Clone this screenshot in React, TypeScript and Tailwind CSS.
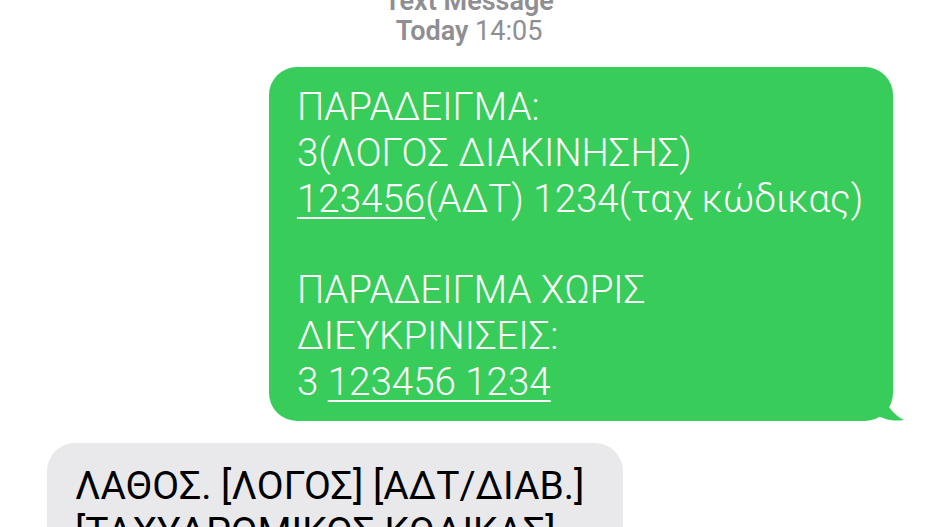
import React from 'react';

const font = { fontFamily: 'Roboto, "Noto Sans", sans-serif' };

const App: React.FC = () => {
  return (
    <div className="w-[938px] h-[527px] overflow-hidden bg-white" style={font}>
      {/* Header */}
      <div className="flex flex-col items-center -mt-[14px] text-[#8e8e93] text-[27px] leading-[30px]">
        <div className="font-semibold">Text Message</div>
        <div>
          <span className="font-semibold">Today</span> 14:05
        </div>
      </div>

      {/* Outgoing */}
      <div className="flex justify-end pr-[45px] mt-[21px]">
        <div className="relative bg-[#38cc5a] rounded-[28px] w-[624px] pl-[28px] pt-[17px] pb-[17px] text-white text-[38.5px] leading-[45.75px] font-light">
          <div>ΠΑΡΑΔΕΙΓΜΑ:</div>
          <div>3(ΛΟΓΟΣ ΔΙΑΚΙΝΗΣΗΣ)</div>
          <div>
            <span className="underline underline-offset-[5px] decoration-2">123456</span>(ΑΔΤ) 1234(ταχ κώδικας)
          </div>
          <div className="h-[45.75px]" />
          <div>ΠΑΡΑΔΕΙΓΜΑ ΧΩΡΙΣ</div>
          <div>ΔΙΕΥΚΡΙΝΙΣΕΙΣ:</div>
          <div>
            3 <span className="underline underline-offset-[5px] decoration-2">123456 1234</span>
          </div>
          <svg className="absolute right-[-11px] bottom-0" width="30" height="34" viewBox="0 0 30 34">
            <path d="M0 0 L10 0 C10 14 16 26 30 33 C18 35 8 32 0 26 Z" fill="#38cc5a" />
          </svg>
        </div>
      </div>

      {/* Incoming */}
      <div className="flex pl-[47px] mt-[22px]">
        <div className="bg-[#e9e9eb] rounded-[28px] w-[576px] pl-[28px] pr-[12px] pt-[21px] pb-[16px] text-black text-[39px] leading-[45.75px]">
          <div>ΛΑΘΟΣ. [ΛΟΓΟΣ] [ΑΔΤ/ΔΙΑΒ.]</div>
          <div>[ΤΑΧΥΔΡΟΜΙΚΟΣ ΚΩΔΙΚΑΣ]</div>
        </div>
      </div>
    </div>
  );
};

export default App;
